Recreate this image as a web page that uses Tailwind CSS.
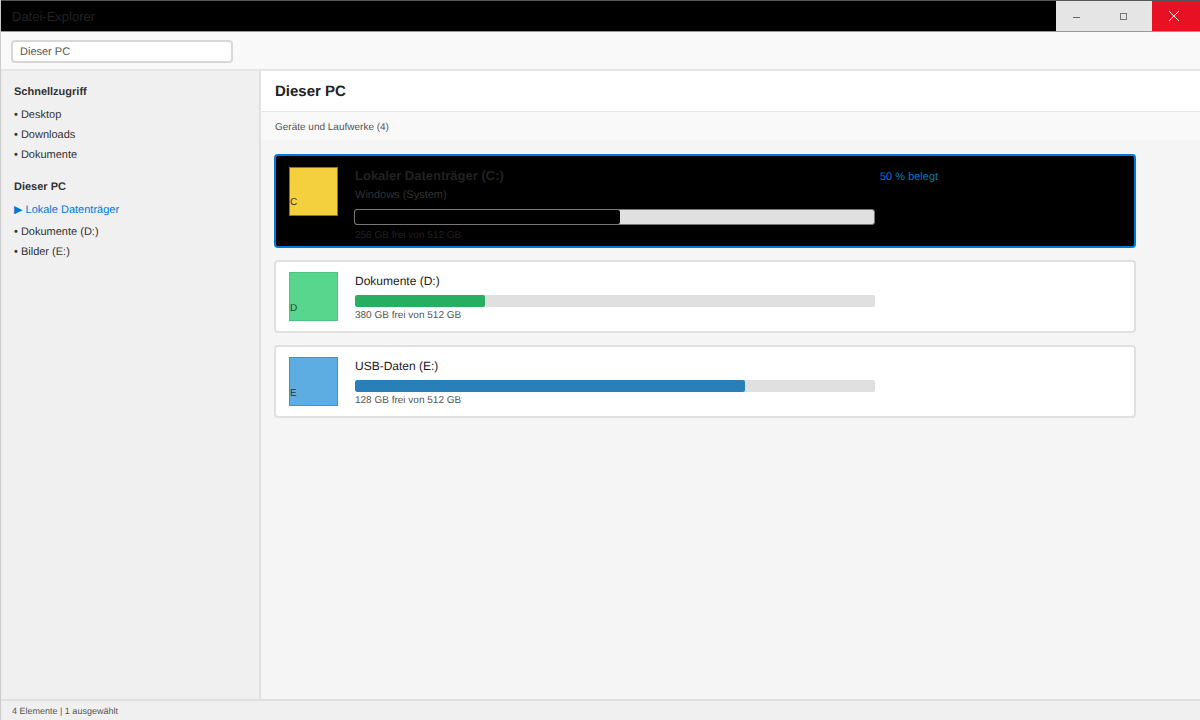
<!DOCTYPE html>
<html lang="de">
<head>
    <meta charset="UTF-8">
    <title>Datei-Explorer</title>
    <script src="https://cdn.jsdelivr.net/npm/@tailwindcss/browser@4"></script>
</head>
<body class="w-[1200px] h-[720px] overflow-hidden bg-[#f5f5f5] font-['Liberation_Sans',Arial,sans-serif] text-[#222] [text-rendering:geometricPrecision]">
    <div class="flex flex-col h-[720px] border-l border-[#666]/30">

        <!-- Titelleiste -->
        <div class="flex h-[32px] shrink-0 bg-black border-t border-t-[#555] border-b border-b-[#999]">
            <div class="flex-1 pl-[11px] text-[13px] leading-[31px] text-[#222]">Datei-Explorer</div>
            <div class="flex w-[144px]">
                <div class="flex-1 flex items-center justify-center bg-[#e5e5e5]">
                    <svg class="mr-2" width="10" height="10" viewBox="0 0 10 10"><path d="M2 6.5h7" stroke="#666" stroke-width="1"/></svg>
                </div>
                <div class="flex-1 flex items-center justify-center bg-[#e5e5e5]">
                    <svg class="mr-2" width="10" height="10" viewBox="0 0 10 10"><rect x="1.5" y="2.5" width="6" height="6" fill="none" stroke="#777" stroke-width="1"/></svg>
                </div>
                <div class="flex-1 flex items-center justify-center bg-[#e81123]">
                    <svg class="mr-1" width="14" height="14" viewBox="0 0 14 14"><path d="M2 2l10 10M12 2L2 12" stroke="#fff" stroke-width="1"/></svg>
                </div>
            </div>
        </div>

        <!-- Adressleiste -->
        <div class="flex items-center h-[39px] shrink-0 px-[10px] bg-[#f9f9f9] border-b-2 border-[#e5e5e5]">
            <div class="w-[222px] h-[23px] mt-px px-[7px] bg-white border-2 border-[#d8d8d8] rounded text-[11px] leading-[20px] text-[#555]">Dieser PC</div>
        </div>

        <div class="flex flex-1 min-h-0">
            <!-- Seitenleiste -->
            <div class="w-[260px] shrink-0 px-[13px] pt-[13px] bg-[#f0f0f0] border-r-2 border-[#e0e0e0] text-[11px] text-[#333]">
                <div class="h-[17px] font-bold leading-[17px]">Schnellzugriff</div>
                <div class="mt-[4px] h-5 leading-5">• Desktop</div>
                <div class="h-5 leading-5">• Downloads</div>
                <div class="h-5 leading-5">• Dokumente</div>
                <div class="mt-[14px] h-[17px] font-bold leading-[17px]">Dieser PC</div>
                <div class="mt-[4px] h-5 leading-5 text-[#0078d4]">▶ Lokale Datenträger</div>
                <div class="mt-[2px] h-5 leading-5">• Dokumente (D:)</div>
                <div class="h-5 leading-5">• Bilder (E:)</div>
            </div>

            <!-- Hauptbereich -->
            <div class="flex-1 min-w-0">
                <div class="h-[41px] px-[14px] bg-white border-b border-[#e8e8e8] text-[15px] font-bold leading-[41px] text-[#222]">Dieser PC</div>
                <div class="h-[28px] px-[14px] bg-[#f9f9f9] text-[10px] leading-[32px] text-[#555]">Geräte und Laufwerke (4)</div>

                <div class="flex flex-col gap-[12px] pt-[14px] pl-[13px]">
                    <!-- Laufwerk C, ausgewählt -->
                    <div class="flex w-[862px] h-[94px] px-[13px] pt-[11px] bg-black border-2 border-[#0078d4] rounded">
                        <div class="flex items-end w-[49px] h-[49px] pb-[6px] bg-[#f4d03f] border border-[#8a7520] text-[10px] leading-[12px] text-[#333]">C</div>
                        <div class="w-[520px] ml-[17px]">
                            <div class="h-[17px] text-[13px] font-bold leading-[17px] text-[#222]">Lokaler Datenträger (C:)</div>
                            <div class="mt-[4px] h-[15px] text-[11px] leading-[15px] text-[#333]">Windows (System)</div>
                            <div class="mt-[6px] w-[521px] h-4 -ml-px bg-[#e0e0e0] border border-[#777] rounded-[3px] overflow-hidden">
                                <div class="h-full bg-black rounded-r-[2px]" style="width: 51%"></div>
                            </div>
                            <div class="mt-[4px] h-[13px] text-[10px] leading-[13px] text-[#222]">256 GB frei von 512 GB</div>
                        </div>
                        <div class="ml-[5px] pt-[2px] text-[11px] leading-[17px] text-[#0078d4]">50 % belegt</div>
                    </div>

                    <!-- Laufwerk D -->
                    <div class="flex w-[862px] h-[73px] px-[13px] pt-[10px] bg-white border-2 border-[#e0e0e0] rounded">
                        <div class="flex items-end w-[49px] h-[49px] pb-[5px] bg-[#58d68d] border border-[#4cc47d] text-[10px] leading-[12px] text-[#333]">D</div>
                        <div class="w-[520px] ml-[17px] pt-px">
                            <div class="h-[17px] text-xs leading-[17px] text-[#222]">Dokumente (D:)</div>
                            <div class="mt-[5px] h-3 bg-[#e0e0e0] rounded-[2px] overflow-hidden">
                                <div class="h-full bg-[#27ae60] rounded-[2px]" style="width: 25%"></div>
                            </div>
                            <div class="mt-[2px] h-[13px] text-[10px] leading-[13px] text-[#555]">380 GB frei von 512 GB</div>
                        </div>
                    </div>

                    <!-- Laufwerk E -->
                    <div class="flex w-[862px] h-[73px] px-[13px] pt-[10px] bg-white border-2 border-[#e0e0e0] rounded">
                        <div class="flex items-end w-[49px] h-[49px] pb-[5px] bg-[#5dade2] border border-[#4a90c5] text-[10px] leading-[12px] text-[#333]">E</div>
                        <div class="w-[520px] ml-[17px] pt-px">
                            <div class="h-[17px] text-xs leading-[17px] text-[#222]">USB-Daten (E:)</div>
                            <div class="mt-[5px] h-3 bg-[#e0e0e0] rounded-[2px] overflow-hidden">
                                <div class="h-full bg-[#2980b9] rounded-[2px]" style="width: 75%"></div>
                            </div>
                            <div class="mt-[2px] h-[13px] text-[10px] leading-[13px] text-[#555]">128 GB frei von 512 GB</div>
                        </div>
                    </div>
                </div>
            </div>
        </div>

        <!-- Statusleiste -->
        <div class="h-[21px] shrink-0 px-[11px] bg-[#f0f0f0] border-t-2 border-[#e0e0e0] text-[9px] leading-[20px] text-[#555]">4 Elemente | 1 ausgewählt</div>
    </div>
</body>
</html>
